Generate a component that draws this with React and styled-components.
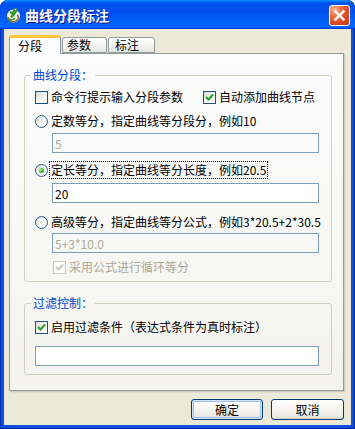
import React from 'react';
import styled, { createGlobalStyle } from 'styled-components';

const GlobalStyle = createGlobalStyle`
  html, body {
    margin: 0;
    padding: 0;
    background: #ffffff;
  }
  body {
    font-family: "Noto Sans CJK SC", "DejaVu Sans", sans-serif;
    font-size: 12px;
    color: #000;
  }
  #root {
    width: 355px;
    height: 429px;
    overflow: hidden;
  }
`;

const Window = styled.div`
  width: 355px;
  height: 429px;
  box-sizing: border-box;
  display: flex;
  flex-direction: column;
  background: #0a4fe0;
  border-radius: 8px 8px 0 0;
  box-shadow: inset 1px 0 0 #0831b8, inset -1px 0 0 #001ea0, inset 0 -1px 0 #001ea0;
  overflow: hidden;
`;

const TitleBar = styled.div`
  height: 29px;
  flex: none;
  display: flex;
  align-items: center;
  padding: 0 5px 0 5px;
  box-sizing: border-box;
  background: linear-gradient(
    to bottom,
    #0997ff 0%,
    #0053ee 10%,
    #0050ee 40%,
    #0066ff 86%,
    #0066ff 92%,
    #005bff 95%,
    #003dd7 97%,
    #003dd7 100%
  );
  border-radius: 8px 8px 0 0;
`;

const TitleText = styled.span`
  margin-left: 4px;
  font-size: 14px;
  font-weight: 700;
  color: #ffffff;
  text-shadow: 1px 1px 0 #0f1089;
  line-height: 18px;
`;

const CloseButton = styled.div`
  margin-left: auto;
  width: 21px;
  height: 21px;
  box-sizing: border-box;
  border: 1px solid #ffffff;
  border-radius: 3px;
  background: radial-gradient(circle at 25% 20%, #f7b79c 0%, #e8683f 35%, #d8461c 70%, #c23a14 100%);
  display: flex;
  align-items: center;
  justify-content: center;
  margin-top: 2px;
`;

const Body = styled.div`
  flex: 1;
  margin: 0 4px 4px;
  background: #ece9d8;
  display: flex;
  flex-direction: column;
  padding: 6px 7px 0 5px;
`;

const TabStrip = styled.div`
  height: 19px;
  display: flex;
  align-items: flex-end;
  gap: 1px;
  margin-bottom: -1px;
  position: relative;
  z-index: 1;
`;

const Tab = styled.div`
  box-sizing: border-box;
  width: ${p => p.$w}px;
  height: ${p => (p.$active ? 19 : 16)}px;
  margin-bottom: ${p => (p.$active ? 0 : 1)}px;
  padding-left: ${p => p.$pl}px;
  border: 1px solid #919b9c;
  border-bottom: ${p => (p.$active ? 'none' : '1px solid #919b9c')};
  border-top: ${p => (p.$active ? '3px solid #ffc83c' : '1px solid #919b9c')};
  border-radius: 3px 3px 0 0;
  background: ${p =>
    p.$active ? '#fcfcfe' : 'linear-gradient(to bottom, #ffffff 0%, #f3f3ef 60%, #e6e5dd 100%)'};
  font-size: 12px;
  line-height: 14px;
  padding-top: ${p => (p.$active ? 1 : 0)}px;
  color: #000;
`;

const Panel = styled.div`
  box-sizing: border-box;
  height: 338px;
  border: 1px solid #919b9c;
  background: linear-gradient(to bottom, #fcfcfe 0%, #f7f7f4 60%, #f4f3ee 100%);
  box-shadow: 1px 1px 0 #d0cebf, 2px 2px 0 #e3e0d0;
  padding: 14px 11px 0 14px;
  display: flex;
  flex-direction: column;
`;

const Group = styled.fieldset`
  margin: ${p => p.$mt || 0}px 0 0;
  padding: 0 12px ${p => p.$pb}px 10px;
  border: 1px solid #d0d0bf;
  border-radius: 3px;
  min-inline-size: 0;
  display: flex;
  flex-direction: column;
`;

const Legend = styled.legend`
  margin-left: -4px;
  padding: 0 2px;
  font-size: 12px;
  line-height: 14px;
  color: #0046d5;
`;

const Row = styled.div`
  display: flex;
  align-items: center;
  height: 16px;
  margin-top: ${p => p.$mt}px;
  margin-left: ${p => p.$ml || 0}px;
`;

const Option = styled.div`
  display: flex;
  align-items: center;
  gap: ${p => p.$gap ?? 3}px;
  margin-left: ${p => p.$ml || 0}px;
  white-space: nowrap;
`;

const Label = styled.span`
  line-height: 14px;
  padding: 1px ${p => (p.$focus ? 1 : 0)}px;
  color: ${p => (p.$disabled ? '#aca899' : '#000')};
  outline: ${p => (p.$focus ? '1px dotted #000' : 'none')};
`;

const Box = styled.span`
  width: 13px;
  height: 13px;
  box-sizing: border-box;
  flex: none;
  border: 1px solid ${p => (p.$disabled ? '#cac8bb' : '#1c5180')};
  background: ${p =>
    p.$disabled ? '#ffffff' : 'linear-gradient(135deg, #dcdcd7 0%, #f6f6f3 55%, #ffffff 100%)'};
  display: flex;
  align-items: center;
  justify-content: center;
`;

const Radio = styled.span`
  width: 13px;
  height: 13px;
  box-sizing: border-box;
  flex: none;
  border-radius: 50%;
  border: 1px solid #2f5f8f;
  background: linear-gradient(135deg, #dcdcd7 0%, #f6f6f3 55%, #ffffff 100%);
  display: flex;
  align-items: center;
  justify-content: center;
`;

const RadioDot = styled.span`
  width: 5px;
  height: 5px;
  border-radius: 50%;
  background: radial-gradient(circle at 35% 35%, #b7f0a8 0%, #3fc22a 45%, #1a9a12 100%);
`;

const Field = styled.input`
  display: block;
  box-sizing: border-box;
  height: 20px;
  width: calc(100% - ${p => p.$ml || 0}px);
  margin: ${p => p.$mt}px 0 0 ${p => p.$ml || 0}px;
  padding: 0 2px;
  border: 1px solid #7f9db9;
  border-radius: 0;
  outline: none;
  background: ${p => (p.disabled ? 'transparent' : '#ffffff')};
  color: ${p => (p.disabled ? '#aca899' : '#000')};
  -webkit-text-fill-color: ${p => (p.disabled ? '#aca899' : '#000')};
  font-family: "Noto Sans CJK SC", "DejaVu Sans", sans-serif;
  font-size: 12px;
`;

const ButtonRow = styled.div`
  display: flex;
  justify-content: flex-end;
  gap: 8px;
  margin-top: 8px;
`;

const Button = styled.div`
  box-sizing: border-box;
  width: ${p => p.$w}px;
  height: 21px;
  border: 1px solid #003c74;
  border-radius: 3px;
  background: linear-gradient(to bottom, #ffffff 0%, #f5f4f0 50%, #ecebe6 85%, #d6d0c5 100%);
  box-shadow: ${p =>
    p.$default ? 'inset 0 0 0 1px #cee7ff, inset 0 0 0 2px #a0c0f0' : 'inset 0 -1px 0 #d6d0c5'};
  display: flex;
  align-items: center;
  justify-content: center;
  font-size: 12px;
  line-height: 14px;
`;

const Check = ({ color }) => (
  <svg width="9" height="9" viewBox="0 0 9 9">
    <path d="M1 4 L3.5 6.5 L8 1.5" fill="none" stroke={color} strokeWidth="2" />
  </svg>
);

const CheckBox = ({ checked, disabled }) => (
  <Box $disabled={disabled}>{checked && <Check color={disabled ? '#cac8bb' : '#21a121'} />}</Box>
);

const RadioButton = ({ checked }) => <Radio>{checked && <RadioDot />}</Radio>;

const AppIcon = () => (
  <svg width="16" height="16" viewBox="0 0 16 16">
    <circle cx="8.5" cy="9" r="6.5" fill="#f4f4e8" />
    <path d="M3 10 C3 14 8 16 11 14 C14 12 14 9 12 8" fill="none" stroke="#8a6a2a" strokeWidth="1.5" />
    <path d="M10 1 C12 1 13 3 12 5 L9 9 C8 11 6 11 5 10 L7 7 C5 7 4 6 5 4 L7 5 Z" fill="#2f9a2f" />
    <path d="M4 12 C6 13 9 13 10 11" fill="none" stroke="#2f9a2f" strokeWidth="1.5" />
    <circle cx="10.5" cy="2.5" r="0.8" fill="#ffffff" />
  </svg>
);

const CloseIcon = () => (
  <svg width="11" height="11" viewBox="0 0 11 11">
    <path d="M1.5 1.5 L9.5 9.5 M9.5 1.5 L1.5 9.5" stroke="#ffffff" strokeWidth="2.4" strokeLinecap="square" />
  </svg>
);

export default function App() {
  return (
    <>
      <GlobalStyle />
      <Window>
        <TitleBar>
          <AppIcon />
          <TitleText>曲线分段标注</TitleText>
          <CloseButton>
            <CloseIcon />
          </CloseButton>
        </TitleBar>
        <Body>
          <TabStrip>
            <Tab $active $w={52} $pl={8}>分段</Tab>
            <Tab $w={45} $pl={4}>参数</Tab>
            <Tab $w={47} $pl={6}>标注</Tab>
          </TabStrip>
          <Panel>
            <Group $pb={6}>
              <Legend>曲线分段：</Legend>
              <Row $mt={7}>
                <Option>
                  <CheckBox />
                  <Label>命令行提示输入分段参数</Label>
                </Option>
                <Option $ml={20}>
                  <CheckBox checked />
                  <Label>自动添加曲线节点</Label>
                </Option>
              </Row>
              <Row $mt={8}>
                <Option>
                  <RadioButton />
                  <Label>定数等分，指定曲线等分段分，例如10</Label>
                </Option>
              </Row>
              <Field $mt={4} $ml={17} disabled defaultValue="5" />
              <Row $mt={9}>
                <Option $gap={2}>
                  <RadioButton checked />
                  <Label $focus>定长等分，指定曲线等分长度，例如20.5</Label>
                </Option>
              </Row>
              <Field $mt={5} $ml={17} readOnly defaultValue="20" />
              <Row $mt={11}>
                <Option>
                  <RadioButton />
                  <Label>高级等分，指定曲线等分公式，例如3*20.5+2*30.5</Label>
                </Option>
              </Row>
              <Field $mt={3} $ml={17} disabled defaultValue="5+3*10.0" />
              <Row $mt={6} $ml={18}>
                <Option>
                  <CheckBox checked disabled />
                  <Label $disabled>采用公式进行循环等分</Label>
                </Option>
              </Row>
            </Group>
            <Group $mt={14} $pb={8}>
              <Legend>过滤控制：</Legend>
              <Row $mt={9}>
                <Option>
                  <CheckBox checked />
                  <Label>启用过滤条件（表达式条件为真时标注）</Label>
                </Option>
              </Row>
              <Field $mt={11} readOnly defaultValue="" />
            </Group>
          </Panel>
          <ButtonRow>
            <Button $default $w={72}>确定</Button>
            <Button $w={73}>取消</Button>
          </ButtonRow>
        </Body>
      </Window>
    </>
  );
}
